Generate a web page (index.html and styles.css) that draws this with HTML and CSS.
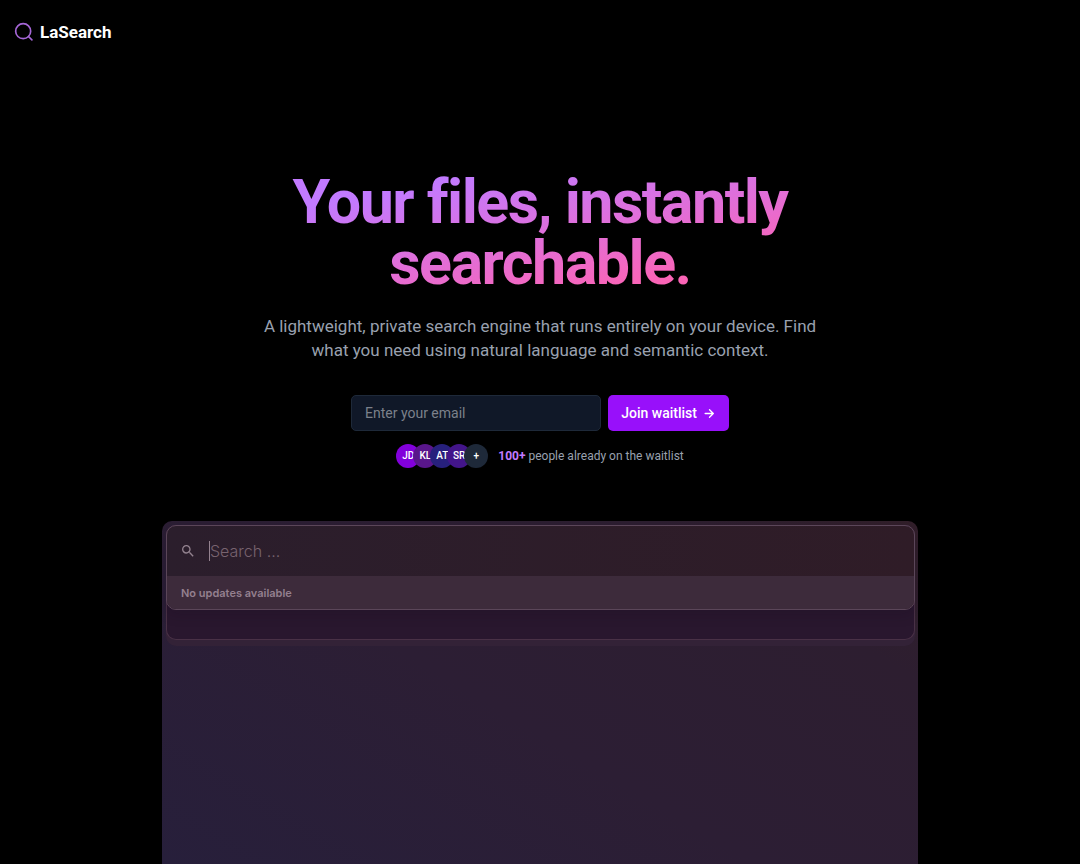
FILE: index.html
```html
<!DOCTYPE html>
<html lang="en">
  <head>
    <meta charset="UTF-8" />
    <meta name="viewport" content="width=device-width, initial-scale=1.0" />
    <title>LaSearch</title>
    <link rel="stylesheet" href="styles.css">
  </head>
  <body>
    <header class="header">
      <a class="logo" href="#">
        <svg class="logo-icon" viewBox="0 0 24 24" fill="none" stroke="currentColor" stroke-width="2" stroke-linecap="round" stroke-linejoin="round" aria-hidden="true">
          <circle cx="11" cy="11" r="9" />
          <path d="M21.5 21.5l-4.1-4.1" />
        </svg>
        <span>LaSearch</span>
      </a>
    </header>
    <main class="hero">
      <h1 class="title">Your files, instantly searchable.</h1>
      <p class="lead">A lightweight, private search engine that runs entirely on your device. Find what you need using natural language and semantic context.</p>
      <form class="waitlist">
        <input class="email" type="email" placeholder="Enter your email" aria-label="Enter your email">
        <button class="join" type="submit">
          Join waitlist
          <svg class="join-icon" viewBox="0 0 24 24" fill="none" stroke="currentColor" stroke-width="2.5" stroke-linecap="round" stroke-linejoin="round" aria-hidden="true">
            <path d="M4 12h15M12 5l7 7-7 7" />
          </svg>
        </button>
      </form>
      <div class="people">
        <div class="avatars">
          <span class="avatar avatar-jd">JD</span>
          <span class="avatar avatar-kl">KL</span>
          <span class="avatar avatar-at">AT</span>
          <span class="avatar avatar-sr">SR</span>
          <span class="avatar avatar-more">+</span>
        </div>
        <p class="people-text"><strong>100+</strong> people already on the waitlist</p>
      </div>
      <section class="preview">
        <div class="preview-back">
          <div class="search-window">
            <div class="search-row">
              <svg class="search-icon" viewBox="0 0 24 24" fill="currentColor" aria-hidden="true">
                <path d="M15.5 14h-.79l-.28-.27A6.47 6.47 0 0 0 16 9.5 6.5 6.5 0 1 0 9.5 16c1.61 0 3.09-.59 4.23-1.57l.27.28v.79l5 4.99L20.49 19l-4.99-5zm-6 0C7.01 14 5 11.99 5 9.5S7.01 5 9.5 5 14 7.01 14 9.5 11.99 14 9.5 14z" />
              </svg>
              <input class="search-input" type="text" placeholder="Search ..." aria-label="Search">
            </div>
            <div class="search-status">No updates available</div>
          </div>
        </div>
      </section>
    </main>
  </body>
</html>
```
FILE: styles.css
```css
* {
  box-sizing: border-box;
}
body {
  margin: 0;
  height: 100vh;
  display: flex;
  flex-direction: column;
  overflow: hidden;
  background-color: #000;
  color: #fff;
  font-family: Roboto, sans-serif;
}
h1,
p {
  margin: 0;
}
input,
button {
  font-family: inherit;
}
.header {
  padding: 20px 14px;
}
.logo {
  display: inline-flex;
  align-items: center;
  gap: 6px;
  color: #fff;
  font-size: 17px;
  font-weight: 700;
  line-height: 24px;
  text-decoration: none;
}
.logo-icon {
  width: 20px;
  height: 20px;
  color: #a566d6;
}
.hero {
  flex: 1;
  min-height: 0;
  display: flex;
  flex-direction: column;
  align-items: center;
  padding: 106px 16px 0;
}
.title {
  max-width: 600px;
  background-image: linear-gradient(to bottom right, #c27aff 20%, #fb64b6 80%);
  background-clip: text;
  -webkit-background-clip: text;
  color: transparent;
  font-size: 61px;
  font-weight: 700;
  line-height: 61px;
  letter-spacing: -0.025em;
  text-align: center;
}
.lead {
  max-width: 568px;
  margin-top: 20px;
  color: #99a1af;
  font-size: 17px;
  line-height: 24px;
  text-align: center;
}
.waitlist {
  width: 100%;
  max-width: 378px;
  display: flex;
  gap: 7px;
  margin-top: 33px;
}
.email {
  flex: 1;
  min-width: 0;
  height: 36px;
  padding: 0 13px;
  border: 1px solid #1e2939;
  border-radius: 5px;
  background-color: #101828;
  color: #fff;
  font-size: 14px;
}
.email::placeholder {
  color: #7c818b;
  opacity: 1;
}
.join {
  display: flex;
  align-items: center;
  gap: 6px;
  height: 36px;
  padding: 0 13px;
  border: 0;
  border-radius: 5px;
  background-color: #9810fa;
  color: #fff;
  font-size: 14px;
  font-weight: 500;
}
.join-icon {
  width: 13px;
  height: 13px;
}
.people {
  display: flex;
  align-items: center;
  gap: 10px;
  margin-top: 13px;
}
.avatars {
  display: flex;
}
.avatar {
  width: 24px;
  height: 24px;
  border-radius: 50%;
  font-size: 10px;
  font-weight: 500;
  line-height: 24px;
  text-align: center;
}
.avatar + .avatar {
  margin-left: -7px;
}
.avatar-jd {
  background-color: #8200db;
}
.avatar-kl {
  background-color: #59168b;
}
.avatar-at {
  background-color: #27207c;
}
.avatar-sr {
  background-color: #43158a;
}
.avatar-more {
  background-color: #1e2939;
}
.people-text {
  color: #99a1af;
  font-size: 12px;
  line-height: 16px;
}
.people-text strong {
  color: #c27aff;
}
.preview {
  flex: 1;
  width: 100%;
  max-width: 756px;
  margin-top: 53px;
  padding: 4px 3px 0 4px;
  border-radius: 10px 10px 0 0;
  background-image: linear-gradient(31deg, #271f3b, #2c1e34 45%, #2d1e30 80%, #321f2a);
}
.preview-back {
  padding-bottom: 29px;
  border: 1px solid #493146;
  border-top: 0;
  border-radius: 10px;
  background-color: #29172e;
  box-shadow: 0 6px 0 #332237;
}
.search-window {
  margin: 0 -1px;
  border: 1px solid #5b4659;
  border-radius: 10px;
  background-image: linear-gradient(to right, #2b1e2c, #2f1c27);
  box-shadow: 0 4px 14px rgba(20, 8, 28, 0.2);
  overflow: hidden;
}
.search-row {
  display: flex;
  align-items: center;
  gap: 13px;
  height: 50px;
  padding: 0 13px;
}
.search-icon {
  width: 16px;
  height: 16px;
  color: #93828f;
}
.search-input {
  flex: 1;
  min-width: 0;
  height: 20px;
  padding: 0;
  border: 0;
  border-left: 1px solid #94828f;
  outline: 0;
  background: none;
  color: #ddd;
  font-family: Inter, sans-serif;
  font-size: 16px;
  font-weight: 300;
}
.search-input::placeholder {
  color: #78636f;
  opacity: 1;
}
.search-status {
  padding: 10px 14px 8px;
  background-color: #3d2b3b;
  color: #94808f;
  font-family: Inter, sans-serif;
  font-size: 11px;
  font-weight: 600;
  line-height: 15px;
}
```
